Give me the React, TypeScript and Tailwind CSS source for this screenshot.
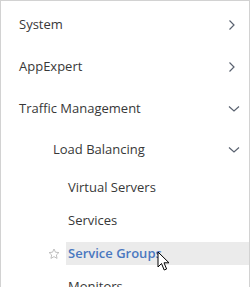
import React from "react";

const font = { fontFamily: '"Open Sans", "Noto Sans", sans-serif' };

function ChevronRight() {
	return (
		<svg width="8" height="12" viewBox="0 0 8 12" fill="none" className="text-[#5a6270]">
			<path d="M1.5 1.5 L6 6 L1.5 10.5" stroke="currentColor" strokeWidth="1.2" />
		</svg>
	);
}

function ChevronDown() {
	return (
		<svg width="12" height="8" viewBox="0 0 12 8" fill="none" className="text-[#5a6270]">
			<path d="M1 1.5 L6 6 L11 1.5" stroke="currentColor" strokeWidth="1.2" />
		</svg>
	);
}

function Star() {
	return (
		<svg width="12" height="12" viewBox="0 0 24 24" fill="none" className="text-[#b0b0b0]">
			<path
				d="M12 2 L14.9 8.4 L21.8 9.2 L16.7 13.9 L18.1 20.8 L12 17.3 L5.9 20.8 L7.3 13.9 L2.2 9.2 L9.1 8.4 Z"
				stroke="currentColor"
				strokeWidth="1.6"
				strokeLinejoin="round"
			/>
		</svg>
	);
}

function Cursor() {
	return (
		<svg width="14" height="21" viewBox="0 0 14 21" className="absolute left-[157px] top-[251px]">
			<path
				d="M1 1 L1 16 L4.5 12.5 L7.2 19 L9.6 18 L7 11.8 L12 11.8 Z"
				fill="#fff"
				stroke="#000"
				strokeWidth="1"
			/>
		</svg>
	);
}

const subItems = ["Virtual Servers", "Services", "Service Groups", "Monitors"];

export default function App() {
	return (
		<div className="relative h-[287px] w-[251px] overflow-hidden bg-white text-[13px] text-[#383838]" style={font}>
			<div className="h-full w-[250px] border-l border-r border-t border-[#d2d2d2] pt-[3px]">
				<div className="flex h-[42px] items-center justify-between pl-[18px] pr-[13px]">
					<span>System</span>
					<ChevronRight />
				</div>
				<div className="flex h-[42px] items-center justify-between pl-[18px] pr-[13px]">
					<span>AppExpert</span>
					<ChevronRight />
				</div>
				<div className="flex h-[41px] items-center justify-between pl-[18px] pr-[9px]">
					<span>Traffic Management</span>
					<ChevronDown />
				</div>
				<div className="flex h-[42px] items-center justify-between pl-[52px] pr-[9px]">
					<span>Load Balancing</span>
					<ChevronDown />
				</div>
				<ul>
					{subItems.map((item) => {
						const active = item === "Service Groups";
						return (
							<li key={item} className="flex h-[33px] items-center">
								<span className="flex w-[65px] justify-end pr-[6px]">{active && <Star />}</span>
								<span
									className={
										active
											? "flex h-[23px] flex-1 items-center bg-[#ebebeb] pl-[2px] font-semibold text-[#4a78c0]"
											: "pl-[2px]"
									}>
									{item}
								</span>
							</li>
						);
					})}
				</ul>
			</div>
			<Cursor />
		</div>
	);
}
